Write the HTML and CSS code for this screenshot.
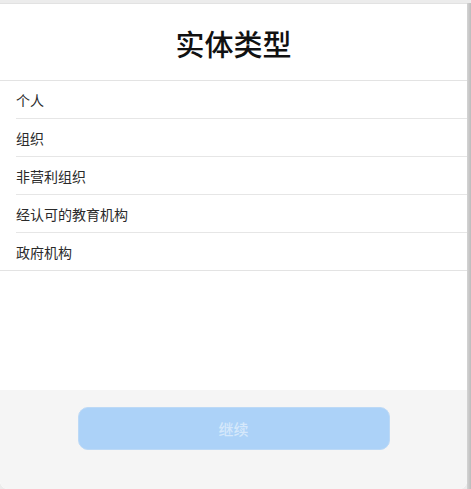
FILE: index.html
```html
<!DOCTYPE html>
<html lang="zh">
<head>
<meta charset="utf-8">
<link rel="stylesheet" href="styles.css">
</head>
<body>
<div class="frame">
  <div class="sheet">
    <header class="header"><h1 class="title">实体类型</h1></header>
    <ul class="list">
      <li class="row">个人</li>
      <li class="row">组织</li>
      <li class="row">非营利组织</li>
      <li class="row">经认可的教育机构</li>
      <li class="row last">政府机构</li>
    </ul>
    <div class="spacer"></div>
    <footer class="footer">
      <button class="btn" disabled>继续</button>
    </footer>
  </div>
  <div class="edge"></div>
</div>
</body>
</html>
```
FILE: styles.css
```css
* { box-sizing: border-box; }
html, body { margin: 0; padding: 0; }
body {
  width: 471px;
  height: 489px;
  background: #ececec;
  font-family: "Noto Sans CJK SC", "Noto Sans", sans-serif;
  overflow: hidden;
}
.frame {
  display: flex;
  height: 489px;
  padding-top: 3px;
}
.sheet {
  width: 467px;
  height: 486px;
  background: #fff;
  display: flex;
  flex-direction: column;
  border-top: 1px solid #e2e2e2;
  border-radius: 0 0 8px 8px;
  overflow: hidden;
}
.edge {
  width: 4px;
  background: linear-gradient(to right, #d4d4d4, #bcbcbc);
}
.header {
  height: 77px;
  flex-shrink: 0;
  display: flex;
  align-items: center;
  justify-content: center;
  border-bottom: 1px solid #e3e3e3;
}
.title {
  margin: 0;
  font-size: 29px;
  font-weight: 500;
  color: #111;
  line-height: 1;
  padding-top: 2px;
}
.list {
  list-style: none;
  margin: 0;
  padding: 0 0 0 16px;
  border-bottom: 1px solid #e3e3e3;
}
.row {
  height: 38px;
  display: flex;
  align-items: center;
  font-size: 14px;
  color: #2a2a2a;
  border-bottom: 1px solid #e6e6e6;
}
.row.last { border-bottom: none; height: 37px; }
.spacer { flex: 1; }
.footer {
  height: 99px;
  flex-shrink: 0;
  background: #f5f5f5;
  display: flex;
  justify-content: center;
  padding-top: 17px;
}
.btn {
  width: 312px;
  height: 43px;
  border: 1px solid #bcd9f6;
  border-radius: 10px;
  background: #acd2f8;
  color: #d5e8fb;
  font-family: inherit;
  font-size: 15px;
  font-weight: 500;
}
```
